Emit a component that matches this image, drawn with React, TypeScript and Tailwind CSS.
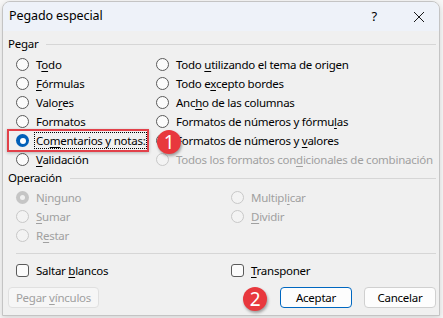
import React from "react";

const font = { fontFamily: '"Segoe UI", "Noto Sans", sans-serif' };

function Acc({ text, at, disabled }: { text: string; at: number; disabled?: boolean }) {
  return (
    <span className={"whitespace-nowrap " + (disabled ? "text-[#a0a0a0]" : "text-black")}>
      {text.slice(0, at)}
      <span className="underline underline-offset-2">{text[at]}</span>
      {text.slice(at + 1)}
    </span>
  );
}

function Radio({ checked, disabled }: { checked?: boolean; disabled?: boolean }) {
  if (checked && disabled)
    return (
      <span className="flex h-[13px] w-[13px] shrink-0 items-center justify-center rounded-full bg-[#c5c5c5]">
        <span className="h-[5px] w-[5px] rounded-full bg-[#f0f0f0]" />
      </span>
    );
  if (checked)
    return (
      <span className="flex h-[13px] w-[13px] shrink-0 items-center justify-center rounded-full bg-[#005fb8]">
        <span className="h-[6px] w-[6px] rounded-full bg-white" />
      </span>
    );
  return (
    <span
      className={
        "h-[13px] w-[13px] shrink-0 rounded-full border " +
        (disabled ? "border-[#c8c8c8] bg-[#f3f3f3]" : "border-[#5a5a5a] bg-[#fbfbfb]")
      }
    />
  );
}

function Row({ text, at, checked, disabled, focus }: { text: string; at: number; checked?: boolean; disabled?: boolean; focus?: boolean }) {
  return (
    <div className="flex h-[19px] items-center gap-[7px] whitespace-nowrap pl-[13px]">
      <Radio checked={checked} disabled={disabled} />
      <span className={focus ? "-ml-[2px] border border-dotted border-black px-[1px] leading-[15px]" : "leading-[15px]"}>
        <Acc text={text} at={at} disabled={disabled} />
      </span>
    </div>
  );
}

function Group({ label }: { label: string }) {
  return (
    <div className="flex h-[16px] items-center pl-[5px] pr-[3px]">
      <span className="mr-[8px] shrink-0 text-black">{label}</span>
      <span className="h-px flex-1 bg-[#d6d6d6]" />
    </div>
  );
}

function Badge({ n, className }: { n: string; className: string }) {
  return (
    <div
      className={
        "absolute flex h-[24px] w-[24px] items-center justify-center rounded-full bg-[#e8383d] text-[19px] leading-none text-white shadow-[1px_2px_3px_rgba(0,0,0,0.35)] " +
        className
      }
    >
      {n}
    </div>
  );
}

export default function App() {
  return (
    <div className="relative h-[318px] w-[443px] overflow-hidden bg-[#f7f7f7] pl-[2px] pt-[1px] text-[11.5px] tracking-[-0.25px]" style={font}>
      <div className="flex h-[315px] w-[438px] flex-col overflow-hidden rounded-t-[8px] border border-[#c4c4c4] bg-[#f0f0f0] shadow-[0_2px_6px_rgba(0,0,0,0.15)]">
        <div className="flex h-[29px] shrink-0 items-center bg-[#eef2f9] pl-[6px] pr-[14px]">
          <span className="flex-1 text-[12.5px] tracking-[-0.1px] text-black">Pegado especial</span>
          <span className="mr-[36px] text-[13px] text-black">?</span>
          <svg width="12" height="12" viewBox="0 0 12 12">
            <path d="M1 1L11 11M11 1L1 11" stroke="#1a1a1a" strokeWidth="1" fill="none" />
          </svg>
        </div>

        <div className="mt-[5px]">
          <Group label="Pegar" />
        </div>
        <div className="mt-[3px] grid grid-cols-[140px_1fr]">
          <div>
            <Row text="Todo" at={1} />
            <Row text="Fórmulas" at={0} />
            <Row text="Valores" at={4} />
            <Row text="Formatos" at={99} />
            <Row text="Comentarios y notas:" at={2} checked focus />
            <Row text="Validación" at={0} />
          </div>
          <div>
            <Row text="Todo utilizando el tema de origen" at={5} />
            <Row text="Todo excepto bordes" at={6} />
            <Row text="Ancho de las columnas" at={3} />
            <Row text="Formatos de números y fórmulas" at={27} />
            <Row text="Formatos de números y valores" at={22} />
            <Row text="Todos los formatos condicionales de combinación" at={22} disabled />
          </div>
        </div>

        <div className="mt-[1px]">
          <Group label="Operación" />
        </div>
        <div className="mt-[2px] grid grid-cols-[215px_1fr]">
          <div>
            <Row text="Ninguno" at={1} checked disabled />
            <Row text="Sumar" at={0} disabled />
            <Row text="Restar" at={1} disabled />
          </div>
          <div>
            <Row text="Multiplicar" at={7} disabled />
            <Row text="Dividir" at={0} disabled />
          </div>
        </div>

        <div className="ml-[13px] mr-[3px] mt-[8px] h-px bg-[#d6d6d6]" />

        <div className="mt-[7px] grid grid-cols-[215px_1fr]">
          <div className="flex h-[19px] items-center gap-[7px] pl-[13px]">
            <span className="h-[13px] w-[13px] rounded-[3px] border border-[#5a5a5a] bg-[#fbfbfb]" />
            <Acc text="Saltar blancos" at={7} />
          </div>
          <div className="flex h-[19px] items-center gap-[7px] pl-[13px]">
            <span className="h-[13px] w-[13px] rounded-[3px] border border-[#5a5a5a] bg-[#fbfbfb]" />
            <Acc text="Transponer" at={0} />
          </div>
        </div>

        <div className="mt-[7px] flex items-center pl-[5px] pr-[3px]">
          <button className="flex h-[21px] w-[91px] items-center justify-center rounded-[4px] border border-[#e0e0e0] bg-[#f6f6f6]">
            <Acc text="Pegar vínculos" at={6} disabled />
          </button>
          <span className="flex-1" />
          <button className="flex h-[21px] w-[72px] items-center justify-center rounded-[4px] border border-[#0067c0] bg-[#fdfdfd] text-black">
            Aceptar
          </button>
          <button className="ml-[12px] flex h-[21px] w-[72px] items-center justify-center rounded-[4px] border border-[#d0d0d0] bg-[#fdfdfd] text-black">
            Cancelar
          </button>
        </div>
      </div>

      <div className="absolute left-[7px] top-[129px] h-[23px] w-[142px] border-2 border-[#e2414a] shadow-[0_1px_3px_rgba(0,0,0,0.25)]" />
      <Badge n="1" className="left-[157px] top-[130px]" />
      <Badge n="2" className="left-[243px] top-[287px]" />
    </div>
  );
}
